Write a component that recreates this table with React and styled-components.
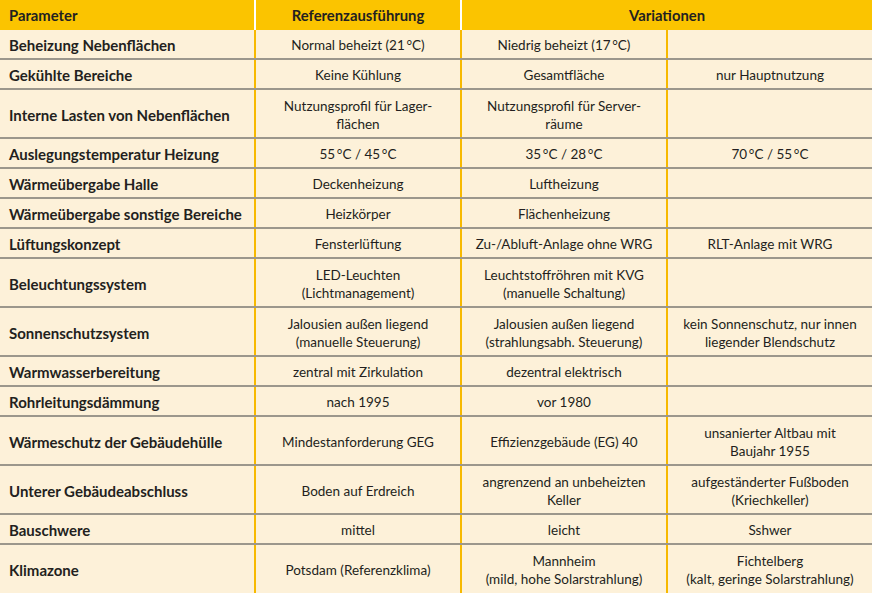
import React from "react";
import styled, { createGlobalStyle } from "styled-components";

const Global = createGlobalStyle`
  html, body { margin: 0; padding: 0; background: #fdf1d9; }
  body { font-family: Lato, "Noto Sans", sans-serif; color: #231f20; }
`;

const Table = styled.div`
  width: 872px;
  display: flex;
  flex-direction: column;
  background: #fdf1d9;
`;

const Row = styled.div`
  display: grid;
  grid-template-columns: 254px 206px 206px 206px;
  box-sizing: border-box;
  height: ${(p) => p.$h}px;
  border-bottom: ${(p) => (p.$last ? "none" : "2px solid #9c978c")};
`;

const HeaderRow = styled.div`
  display: grid;
  grid-template-columns: 254px 206px 412px;
  height: 30px;
  background: #fbc400;
`;

const HeadCell = styled.div`
  display: flex;
  align-items: center;
  justify-content: ${(p) => (p.$left ? "flex-start" : "center")};
  padding-left: ${(p) => (p.$left ? "9px" : "0")};
  border-left: ${(p) => (p.$left ? "none" : "2px solid #ffffff")};
  font-weight: 700;
  font-size: 14.8px;
  padding-bottom: 1px;
`;

const NameCell = styled.div`
  display: flex;
  align-items: center;
  padding-left: 9px;
  padding-top: 2px;
  font-weight: 700;
  font-size: 15px;
`;

const Cell = styled.div`
  display: flex;
  align-items: center;
  justify-content: center;
  text-align: center;
  border-left: 2px solid #f7b900;
  font-size: 13.5px;
  line-height: 18px;
  padding-top: 2px;
  white-space: pre-line;
`;

const rows = [
  ["Beheizung Nebenflächen", "Normal beheizt (21\u2009°C)", "Niedrig beheizt (17\u2009°C)", ""],
  ["Gekühlte Bereiche", "Keine Kühlung", "Gesamtfläche", "nur Hauptnutzung"],
  ["Interne Lasten von Nebenflächen", "Nutzungsprofil für Lager-\nflächen", "Nutzungsprofil für Server-\nräume", ""],
  ["Auslegungstemperatur Heizung", "55\u2009°C / 45\u2009°C", "35\u2009°C / 28\u2009°C", "70\u2009°C / 55\u2009°C"],
  ["Wärmeübergabe Halle", "Deckenheizung", "Luftheizung", ""],
  ["Wärmeübergabe sonstige Bereiche", "Heizkörper", "Flächenheizung", ""],
  ["Lüftungskonzept", "Fensterlüftung", "Zu-/Abluft-Anlage ohne WRG", "RLT-Anlage mit WRG"],
  ["Beleuchtungssystem", "LED-Leuchten\n(Lichtmanagement)", "Leuchtstoffröhren mit KVG\n(manuelle Schaltung)", ""],
  ["Sonnenschutzsystem", "Jalousien außen liegend\n(manuelle Steuerung)", "Jalousien außen liegend\n(strahlungsabh. Steuerung)", "kein Sonnenschutz, nur innen\nliegender Blendschutz"],
  ["Warmwasserbereitung", "zentral mit Zirkulation", "dezentral elektrisch", ""],
  ["Rohrleitungsdämmung", "nach 1995", "vor 1980", ""],
  ["Wärmeschutz der Gebäudehülle", "Mindestanforderung GEG", "Effizienzgebäude (EG) 40", "unsanierter Altbau mit\nBaujahr 1955"],
  ["Unterer Gebäudeabschluss", "Boden auf Erdreich", "angrenzend an unbeheizten\nKeller", "aufgeständerter Fußboden\n(Kriechkeller)"],
  ["Bauschwere", "mittel", "leicht", "Sshwer"],
  ["Klimazone", "Potsdam (Referenzklima)", "Mannheim\n(mild, hohe Solarstrahlung)", "Fichtelberg\n(kalt, geringe Solarstrahlung)"],
];

const heights = [30, 30, 49, 30, 30, 30, 30, 49, 49, 30, 30, 49, 49, 30, 48];

export default function App() {
  return (
    <>
      <Global />
      <Table>
        <HeaderRow>
          <HeadCell $left>Parameter</HeadCell>
          <HeadCell>Referenzausführung</HeadCell>
          <HeadCell>Variationen</HeadCell>
        </HeaderRow>
        {rows.map((r, i) => (
          <Row key={i} $h={heights[i]} $last={i === rows.length - 1}>
            <NameCell>{r[0]}</NameCell>
            <Cell>{r[1]}</Cell>
            <Cell>{r[2]}</Cell>
            <Cell>{r[3]}</Cell>
          </Row>
        ))}
      </Table>
    </>
  );
}
